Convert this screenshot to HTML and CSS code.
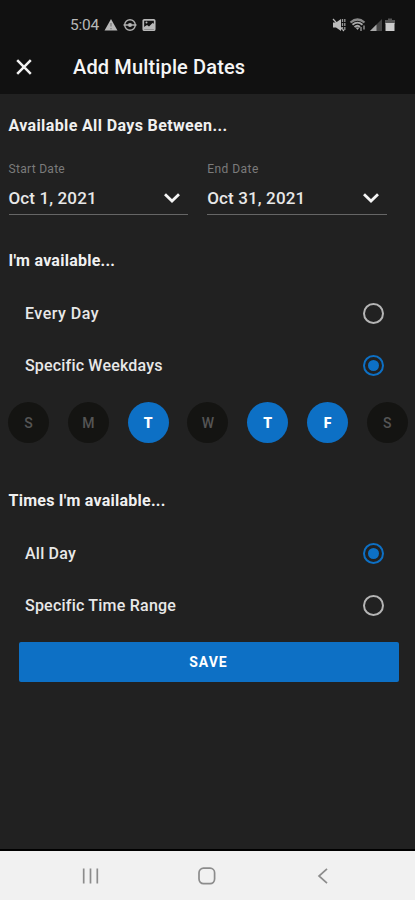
FILE: index.html
```html
<!DOCTYPE html>
<html lang="en">

<head>
    <meta charset="UTF-8">
    <meta name="viewport" content="width=device-width, initial-scale=1.0">
    <title>Add Multiple Dates</title>
    <link rel="stylesheet" href="styles.css">
</head>

<body>
    <div class="screen">

        <!-- status bar and title -->
        <header class="top">
            <div class="status">
                <span class="time">5:04</span>
                <svg class="notices" width="54" height="14" viewBox="0 0 54 14">
                    <path d="M7 1L13.5 12.5H.5z" fill="#b8b8b8" />
                    <path d="M7 5v3.5M7 10v1.3" stroke="#777" stroke-width="1.2" />
                    <circle cx="26" cy="7" r="5.3" fill="none" stroke="#b0b0b0" stroke-width="1.4" />
                    <circle cx="26" cy="7" r="2.1" fill="#b8b8b8" />
                    <path d="M19.500 7h5M27.500 7h5" stroke="#b0b0b0" stroke-width="1.3" />
                    <rect x="39.300" y="1.800" width="11.400" height="10.400" rx="1" fill="none" stroke="#b8b8b8" stroke-width="1.700" />
                    <path d="M40 11V9l3-2 2 1.500L48.500 5 50.500 6v5z" fill="#b8b8b8" />
                    <circle cx="42.500" cy="4.500" r="1" fill="#b8b8b8" />
                </svg>
                <svg class="signals" width="66" height="16" viewBox="0 0 66 16">
                    <path d="M1 5.500h3l5-3.500v12L4 10.500H1z" fill="#bbb" />
                    <path d="M1 2l11 12" stroke="#bbb" stroke-width="1.200" />
                    <path d="M10.500 2v12M12.800 2v12" stroke="#999" stroke-width="1.300" stroke-dasharray="3 1" />
                    <path d="M18.500 5.500Q25.500-.500 32.500 5.500" fill="none" stroke="#888" stroke-width="2.200" />
                    <path d="M20.500 7.700Q25.500 3.500 30.500 7.700M22.500 10Q25.500 7.500 28 10" fill="none" stroke="#aaa" stroke-width="1.800" />
                    <path d="M23.500 10.500h4l-2 2.500z" fill="#aaa" />
                    <path d="M29 14v-4M32 8.500v4" stroke="#777" stroke-width="1.800" />
                    <path d="M38 14L50 2v12z" fill="#444" />
                    <path d="M38 14l6.500-6.500V14z" fill="#aaa" />
                    <path d="M56 1.500h4V3h3v4h-10V3h3z" fill="#555" />
                    <path d="M53.500 6h9v8h-9z" fill="#ccc" />
                </svg>
            </div>
            <div class="title-bar">
                <svg class="close" width="16" height="16" viewBox="0 0 16 16">
                    <path d="M1.200 1.200l13.600 13.600M14.800 1.200L1.200 14.800" stroke="#f2f2f2" stroke-width="2.500" />
                </svg>
                <h1>Add Multiple Dates</h1>
            </div>
        </header>

        <main>
            <!-- date range -->
            <h2 class="between">Available All Days Between...</h2>
            <div class="dates">
                <div class="date">
                    <span class="label start">Start Date</span>
                    <div class="value">
                        <span>Oct 1, 2021</span>
                        <svg width="18" height="12" viewBox="0 0 18 12">
                            <path d="M2 2.300l7 6.700 7-6.700" fill="none" stroke="#f5f5f5" stroke-width="2.800" />
                        </svg>
                    </div>
                </div>
                <div class="date">
                    <span class="label end">End Date</span>
                    <div class="value">
                        <span>Oct 31, 2021</span>
                        <svg width="18" height="12" viewBox="0 0 18 12">
                            <path d="M2 2.300l7 6.700 7-6.700" fill="none" stroke="#f5f5f5" stroke-width="2.800" />
                        </svg>
                    </div>
                </div>
            </div>

            <!-- weekdays -->
            <h2 class="avail">I'm available...</h2>
            <div class="option">
                <span class="every">Every Day</span>
                <span class="radio"></span>
            </div>
            <div class="option">
                <span class="weekdays">Specific Weekdays</span>
                <span class="radio checked"></span>
            </div>
            <div class="days">
                <span class="day">S</span>
                <span class="day">M</span>
                <span class="day on">T</span>
                <span class="day">W</span>
                <span class="day on">T</span>
                <span class="day on">F</span>
                <span class="day">S</span>
            </div>

            <!-- times -->
            <h2 class="times">Times I'm available...</h2>
            <div class="option">
                <span>All Day</span>
                <span class="radio checked"></span>
            </div>
            <div class="option">
                <span>Specific Time Range</span>
                <span class="radio"></span>
            </div>
            <button class="save">SAVE</button>
        </main>

        <!-- android navigation -->
        <nav>
            <svg width="18" height="18" viewBox="0 0 18 18">
                <path d="M1.700 1.500v15M8.500 1.500v15M15.300 1.500v15" stroke="#8c8c8c" stroke-width="1.700" />
            </svg>
            <svg width="18" height="18" viewBox="0 0 18 18">
                <rect x="1" y="1.200" width="15.600" height="15.400" rx="4.500" fill="none" stroke="#8c8c8c" stroke-width="1.700" />
            </svg>
            <svg width="18" height="18" viewBox="0 0 18 18">
                <path d="M13 1.800L5 9l8 7.200" fill="none" stroke="#8c8c8c" stroke-width="1.700" />
            </svg>
        </nav>
    </div>
</body>

</html>
```

FILE: styles.css
```css
* {
    margin: 0;
    padding: 0;
    box-sizing: border-box;
}

body {
    font-family: Roboto, "Liberation Sans", sans-serif;
    background-color: #212121;
    color: #e8e8e8;
}

svg {
    display: block;
    flex: none;
}

.screen {
    height: 900px;
    display: flex;
    flex-direction: column;
    overflow: hidden;
}

.top {
    height: 94px;
    background-color: #111111;
}

.status {
    height: 40px;
    padding: 9px 17px 0 70px;
    display: flex;
    align-items: center;
}

.time {
    width: 34px;
    font-size: 15.500px;
    letter-spacing: -0.200px;
    color: #b8b8b8;
}

.signals {
    margin-left: auto;
}

.title-bar {
    height: 54px;
    padding-left: 16px;
    display: flex;
    align-items: center;
    gap: 41px;
}

.title-bar h1 {
    font-size: 20px;
    font-weight: 500;
    letter-spacing: 0.140px;
    color: #f5f5f5;
}

main {
    flex: 1;
}

h2 {
    height: 30px;
    padding-left: 8.500px;
    font-size: 16px;
    line-height: 30px;
    font-weight: 700;
    letter-spacing: 0.250px;
    color: #f0f0f0;
}

.between {
    margin-top: 17px;
    letter-spacing: 0.370px;
}

.dates {
    padding: 19px 28px 0 8.500px;
    display: flex;
    gap: 19px;
}

.date {
    flex: 1;
    height: 55px;
    border-bottom: 1px solid #666666;
}

.label {
    display: block;
    height: 19px;
    line-height: 19px;
    font-size: 12px;
    letter-spacing: 0.300px;
    color: #7b7b7b;
}

.end {
    letter-spacing: 0.450px;
}

.value {
    height: 37px;
    padding-right: 7px;
    display: flex;
    align-items: center;
    justify-content: space-between;
    font-size: 17px;
    font-weight: 500;
    letter-spacing: 0.130px;
}

.avail {
    margin-top: 31px;
    margin-bottom: 11px;
}

.option {
    height: 52.500px;
    padding: 0 31.500px 0 25px;
    display: flex;
    align-items: center;
    justify-content: space-between;
    font-size: 16px;
    font-weight: 500;
    letter-spacing: 0.220px;
}

.every {
    letter-spacing: 0.500px;
}

.weekdays {
    letter-spacing: 0.180px;
}

.radio {
    width: 21px;
    height: 21px;
    border: 2px solid #b5b5b5;
    border-radius: 50%;
    display: grid;
    place-items: center;
}

.checked {
    border-color: #0d70c5;
}

.checked::before {
    content: "";
    width: 11px;
    height: 11px;
    border-radius: 50%;
    background-color: #0d70c5;
}

.days {
    height: 41px;
    margin-top: 10px;
    padding-left: 8px;
    display: flex;
    gap: 18.800px;
}

.day {
    flex: none;
    width: 41px;
    height: 41px;
    border-radius: 50%;
    background-color: #141412;
    color: #555555;
    display: grid;
    place-items: center;
    font-size: 14px;
    font-weight: 500;
}

.on {
    background-color: #0d70c5;
    color: #ffffff;
    font-weight: 900;
}

.times {
    margin-top: 43px;
    margin-bottom: 11px;
}

.save {
    display: block;
    width: 380px;
    height: 40px;
    margin: 10px 0 0 18.500px;
    border: none;
    border-radius: 2px;
    background-color: #0d70c5;
    color: #ffffff;
    font-family: inherit;
    font-size: 14px;
    font-weight: 700;
    letter-spacing: 1px;
}

nav {
    height: 51px;
    padding: 0 83px 0 82px;
    border-top: 2px solid #000000;
    background-color: #f1f1f1;
    display: flex;
    align-items: center;
    justify-content: space-between;
}
```
